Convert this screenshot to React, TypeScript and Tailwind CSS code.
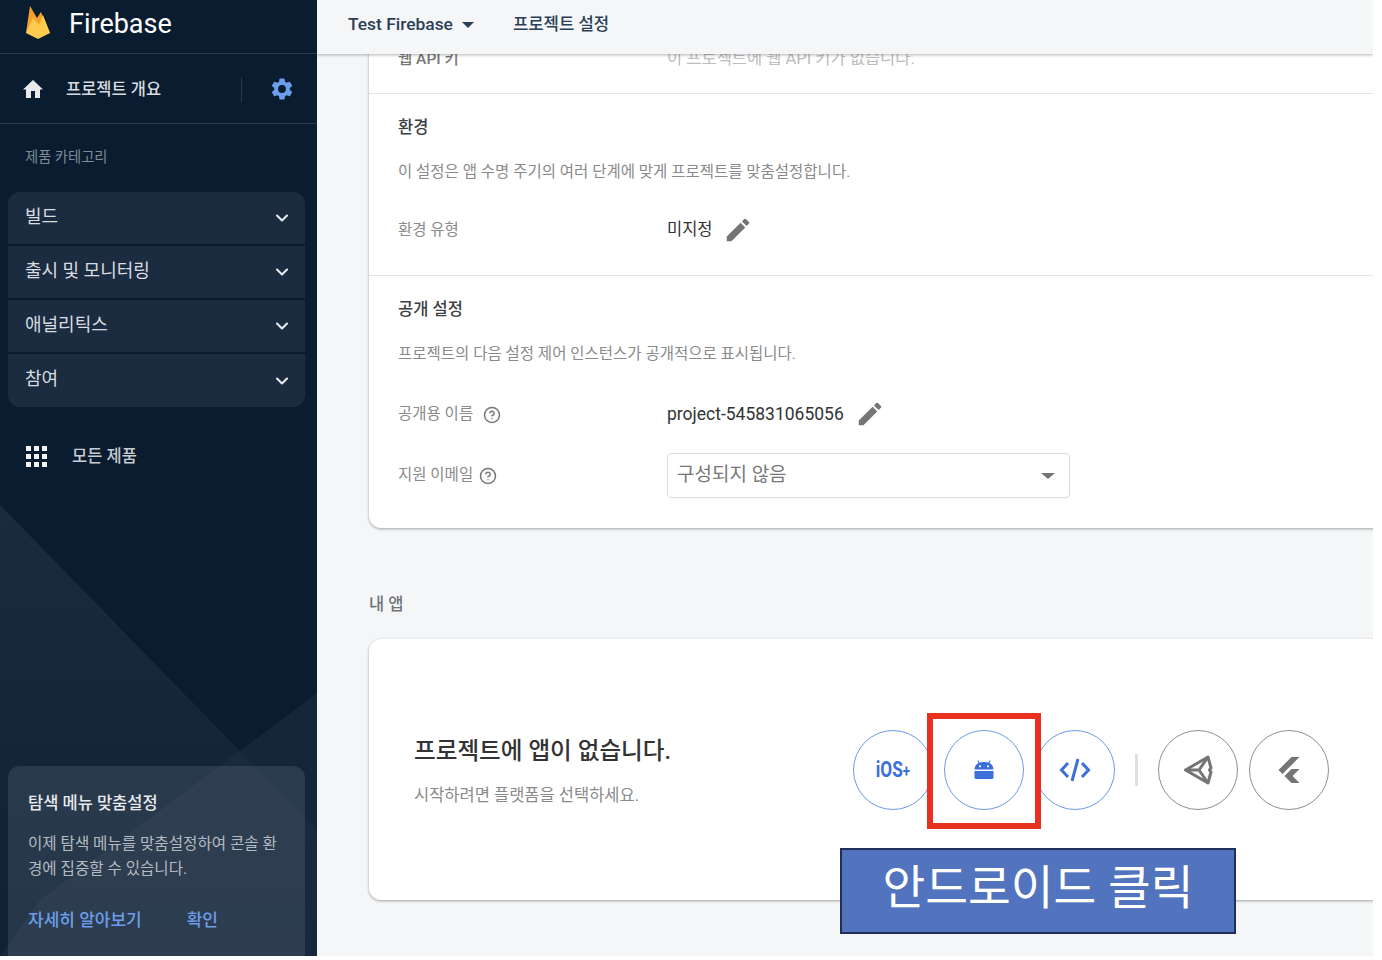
import { ChevronDown, CircleHelp } from "lucide-react";
import { SiFlutter } from "react-icons/si";

const FONT = "font-['Roboto','Noto_Sans_CJK_KR',sans-serif]";

const menuItems = ["빌드", "출시 및 모니터링", "애널리틱스", "참여"];

const FirebaseLogo = () => (
  <svg width="24" height="33" viewBox="0 0 24 33">
    <path d="M0 27 L4 0 L11 12 L15 6 L24 27 Z" fill="#f5a02c" />
    <path d="M0 27 L7 12 L13 19 L17 9 L24 27 L12 33 Z" fill="#fdcb4e" />
  </svg>
);

const HomeIcon = () => (
  <svg width="24" height="24" viewBox="0 0 24 24" fill="#e8eaed">
    <path d="M10 21v-7h4v7h5v-8.5h3L12 3 2 12.5h3V21z" />
  </svg>
);

const GearIcon = () => (
  <svg width="26" height="26" viewBox="0 0 24 24" fill="#6d9eeb">
    <path d="M19.14 12.94c.04-.3.06-.61.06-.94s-.02-.64-.07-.94l2.03-1.58a.49.49 0 0 0 .12-.61l-1.92-3.32a.49.49 0 0 0-.59-.22l-2.39.96c-.5-.38-1.03-.7-1.62-.94l-.36-2.54a.48.48 0 0 0-.48-.41h-3.84a.48.48 0 0 0-.47.41l-.36 2.54c-.59.24-1.13.57-1.62.94l-2.39-.96a.49.49 0 0 0-.59.22L2.74 8.87a.48.48 0 0 0 .12.61l2.03 1.58c-.05.3-.09.63-.09.94s.02.64.07.94l-2.03 1.58a.49.49 0 0 0-.12.61l1.92 3.32c.12.22.37.29.59.22l2.39-.96c.5.38 1.03.7 1.62.94l.36 2.54c.05.24.24.41.48.41h3.84c.24 0 .44-.17.47-.41l.36-2.54c.59-.24 1.13-.56 1.62-.94l2.39.96c.22.08.47 0 .59-.22l1.92-3.32a.48.48 0 0 0-.12-.61l-2.01-1.58zM12 15.6A3.6 3.6 0 1 1 12 8.4a3.6 3.6 0 0 1 0 7.2z" />
  </svg>
);

const GridIcon = () => (
  <div className="grid grid-cols-3 gap-[3px]">
    {Array.from({ length: 9 }).map((_, i) => (
      <div key={i} className="w-[5px] h-[5px] bg-[#f1f3f4]" />
    ))}
  </div>
);

const PencilIcon = () => (
  <svg width="30" height="30" viewBox="0 0 24 24" fill="#757575">
    <path d="M3 17.25V21h3.75L17.81 9.94l-3.75-3.75L3 17.25zM20.71 7.04a1 1 0 0 0 0-1.41l-2.34-2.34a1 1 0 0 0-1.41 0l-1.83 1.83 3.75 3.75 1.83-1.83z" />
  </svg>
);

const AndroidIcon = () => (
  <svg width="22" height="22" viewBox="0 0 22 22" fill="#3b6fd9">
    <path d="M1.5 10.5 C1.5 7.5 3.2 5.2 5.6 4 L4.4 1.8 L5.2 1.3 L6.6 3.6 C8.8 2.9 13.2 2.9 15.4 3.6 L16.8 1.3 L17.6 1.8 L16.4 4 C18.8 5.2 20.5 7.5 20.5 10.5 Z M7 6.2 a1.1 1.1 0 1 0 0 2.2 a1.1 1.1 0 1 0 0-2.2 Z M15 6.2 a1.1 1.1 0 1 0 0 2.2 a1.1 1.1 0 1 0 0-2.2 Z" fillRule="evenodd" />
    <path d="M1.5 12 H20.5 V18.5 a1.5 1.5 0 0 1-1.5 1.5 H3 a1.5 1.5 0 0 1-1.5-1.5 Z" />
  </svg>
);

const CodeIcon = () => (
  <svg width="32" height="26" viewBox="0 0 32 26" fill="none" stroke="#3b6fd9" strokeWidth="3">
    <path d="M9 6 L2.5 13 L9 20" />
    <path d="M23 6 L29.5 13 L23 20" />
    <path d="M19 2 L13 24" />
  </svg>
);

// older Unity cube mark, the package only has the newer one
const UnityIcon = () => (
  <svg width="30" height="32" viewBox="0 0 30 32" fill="none" stroke="#757575" strokeWidth="3" strokeLinejoin="round">
    <path d="M2.5 16 L25 3 L28 14 L26.5 16 L28 18 L25 29 Z" />
    <path d="M2.5 16 H16 L25 3 M16 16 L25 29" />
  </svg>
);

const SectionLabel = ({ children }: { children: React.ReactNode }) => (
  <div className="w-[269px] shrink-0 flex items-center pt-[1px] text-[15.5px] text-[#8a8a8a]">
    {children}
  </div>
);

const Circle = ({
  children,
  muted,
}: {
  children: React.ReactNode;
  muted?: boolean;
}) => (
  <div
    className={`w-[80px] h-[80px] shrink-0 rounded-full border-[1.5px] flex items-center justify-center ${
      muted ? "border-[#8f8f8f]" : "border-[#6d9bea]"
    }`}
  >
    {children}
  </div>
);

const Sidebar = () => (
  <aside className="relative w-[317px] shrink-0 h-full bg-[#0a1c30] flex flex-col overflow-hidden">
    {/* background shapes */}
    <svg className="absolute inset-0" width="317" height="956" viewBox="0 0 317 956">
      <defs>
        <linearGradient id="fadeA" x1="0" y1="0" x2="0" y2="1">
          <stop offset="0" stopColor="#1a2b3e" />
          <stop offset="1" stopColor="#0e2135" />
        </linearGradient>
      </defs>
      <path d="M0 505 L317 830 V956 H0 Z" fill="url(#fadeA)" />
      <path d="M317 693 L40 900 L0 956 H317 Z" fill="#1f3043" fillOpacity="0.55" />
    </svg>

    <div className="relative flex flex-col h-full">
      {/* Logo */}
      <div className="h-[54px] shrink-0 flex items-center border-b border-[#2a3a4c] pl-[26px] pb-[8px]">
        <FirebaseLogo />
        <span className="ml-[19px] mt-[3px] text-[27px] text-white font-['Roboto',sans-serif]">
          Firebase
        </span>
      </div>

      {/* Project overview */}
      <div className="h-[70px] shrink-0 flex items-center border-b border-[#2a3a4c] pl-[21px] pt-[1px]">
        <HomeIcon />
        <span className="ml-[21px] mt-[2px] text-[16.5px] font-medium text-[#d7dade]">
          프로젝트 개요
        </span>
        <div className="ml-[80px] w-px h-[25px] bg-[#2a3a4c]" />
        <div className="ml-[27px]">
          <GearIcon />
        </div>
      </div>

      <div className="pl-[25px] mt-[24px] text-[14.3px] leading-[18px] text-[#7f8a96]">
        제품 카테고리
      </div>

      {/* Categories */}
      <div className="mx-2 mt-[26px] rounded-xl overflow-hidden flex flex-col gap-[2px] w-[297px]">
        {menuItems.map((item) => (
          <div
            key={item}
            className="h-[52px] last:h-[53px] bg-[#1b2c41] flex items-center justify-between pl-[17px] pr-[13px]"
          >
            <span className="text-[18px] pb-[4px] text-[#d9dce0]">{item}</span>
            <ChevronDown size={20} strokeWidth={2.5} className="text-[#e8eaed]" />
          </div>
        ))}
      </div>

      <div className="flex items-center pl-[26px] mt-[36px]">
        <GridIcon />
        <span className="ml-[25px] mt-[2px] text-[16.5px] font-medium text-[#c9cdd2]">
          모든 제품
        </span>
      </div>

      {/* Customize card */}
      <div className="mt-auto mx-2 w-[297px] h-[190px] rounded-t-xl bg-[#f1f5ff]/10 pl-5 pr-5 pt-[28px]">
        <div className="text-[16.5px] leading-[20px] font-medium text-[#e8eaed]">
          탐색 메뉴 맞춤설정
        </div>
        <div className="mt-[18px] text-[15.6px] leading-[25px] text-[#b4bac2]">
          이제 탐색 메뉴를 맞춤설정하여 콘솔 환경에 집중할 수 있습니다.
        </div>
        <div className="mt-[26px] flex text-[17px] font-medium text-[#6d9eeb]">
          <span>자세히 알아보기</span>
          <span className="ml-[45px]">확인</span>
        </div>
      </div>
    </div>
  </aside>
);

const Header = () => (
  <header className="relative z-10 h-[54px] shrink-0 bg-[#f5f6f8] shadow-[0_1px_3px_rgba(0,0,0,0.3)] flex items-center pl-[31px] pb-[5px] text-[#2b4056]">
    <span className="text-[17.4px] font-medium">Test Firebase</span>
    <span className="ml-[9px] w-0 h-0 border-x-[6px] border-x-transparent border-t-[6px] border-t-[#2b4056]" />
    <span className="ml-[39px] text-[16.7px] font-medium">프로젝트 설정</span>
  </header>
);

const SettingsCard = () => (
  <section className="w-[1100px] bg-white rounded-b-xl shadow-[0_1px_3px_rgba(0,0,0,0.35)]">
    {/* API key row, mostly hidden behind the header */}
    <div className="h-[50px] pl-[29px] flex items-start pt-[3px] border-b border-[#e4e6e8]">
      <SectionLabel>
        <span className="font-medium text-[#777]">웹 API 키</span>
      </SectionLabel>
      <span className="text-[16.5px] text-[#bdbdbd]">이 프로젝트에 웹 API 키가 없습니다.</span>
    </div>

    {/* Environment */}
    <div className="h-[182px] pl-[29px] pt-[23px] border-b border-[#e4e6e8]">
      <h3 className="text-[16.5px] leading-[22px] font-medium text-[#3c4043]">환경</h3>
      <p className="mt-[22px] text-[15.5px] leading-[22px] text-[#8a8a8a]">
        이 설정은 앱 수명 주기의 여러 단계에 맞게 프로젝트를 맞춤설정합니다.
      </p>
      <div className="mt-[29px] flex items-center h-[36px]">
        <SectionLabel>환경 유형</SectionLabel>
        <span className="text-[16.5px] text-[#333]">미지정</span>
        <span className="ml-[10px] flex">
          <PencilIcon />
        </span>
      </div>
    </div>

    {/* Public settings */}
    <div className="h-[252px] pl-[29px] pt-[23px]">
      <h3 className="text-[16.5px] leading-[22px] font-medium text-[#3c4043]">공개 설정</h3>
      <p className="mt-[22px] text-[15.5px] leading-[22px] text-[#8a8a8a]">
        프로젝트의 다음 설정 제어 인스턴스가 공개적으로 표시됩니다.
      </p>
      <div className="mt-[31px] flex items-center h-[36px]">
        <SectionLabel>
          공개용 이름
          <CircleHelp size={18} className="ml-[10px] text-[#777]" />
        </SectionLabel>
        <span className="text-[17.5px] text-[#333]">project-545831065056</span>
        <span className="ml-[11px] flex">
          <PencilIcon />
        </span>
      </div>
      <div className="mt-[21px] flex items-center h-[45px]">
        <SectionLabel>
          지원 이메일
          <CircleHelp size={18} className="ml-[6px] text-[#777]" />
        </SectionLabel>
        <div className="w-[403px] h-[45px] rounded border border-[#dcdcdc] flex items-center justify-between pl-[9px] pr-[14px]">
          <span className="text-[19px] text-[#777]">구성되지 않음</span>
          <span className="w-0 h-0 border-x-[7px] border-x-transparent border-t-[6px] border-t-[#757575]" />
        </div>
      </div>
    </div>
  </section>
);

const AppsCard = () => (
  <section className="w-[1100px] h-[261px] mt-[23px] bg-white rounded-xl shadow-[0_1px_3px_rgba(0,0,0,0.35)] flex items-center pl-[45px]">
    <div className="w-[439px] shrink-0 pt-[4px]">
      <h2 className="text-[23.6px] leading-[30px] font-medium text-[#333]">
        프로젝트에 앱이 없습니다.
      </h2>
      <p className="mt-[19px] text-[16.5px] leading-[22px] text-[#8a8a8a]">
        시작하려면 플랫폼을 선택하세요.
      </p>
    </div>
    <div className="flex items-center gap-[11px]">
      <Circle>
        <span className="text-[22px] font-bold text-[#3b6fd9] scale-x-[0.78] whitespace-nowrap">
          iOS<span className="text-[17px]">+</span>
        </span>
      </Circle>
      <Circle>
        <AndroidIcon />
      </Circle>
      <Circle>
        <CodeIcon />
      </Circle>
      <div className="w-[3px] h-[32px] bg-[#e0e0e0] mx-[9px]" />
      <Circle muted>
        <UnityIcon />
      </Circle>
      <Circle muted>
        <SiFlutter size={26} className="text-[#757575]" />
      </Circle>
    </div>
  </section>
);

export default function App() {
  return (
    <div className={`relative w-[1373px] h-[956px] flex overflow-hidden ${FONT}`}>
      <Sidebar />
      <main className="flex-1 min-w-0 h-full bg-[#f5f6f8] flex flex-col overflow-hidden">
        <Header />
        <div className="-mt-[10px] pl-[52px]">
          <SettingsCard />
          <div className="mt-[66px] text-[16.5px] leading-[22px] font-medium text-[#6f7479]">
            내 앱
          </div>
          <AppsCard />
        </div>
      </main>

      {/* Tutorial annotations */}
      <div className="absolute left-[927px] top-[713px] w-[114px] h-[116px] border-[6px] border-[#e8321f]" />
      <div className="absolute left-[840px] top-[848px] w-[396px] h-[86px] bg-[#5273bd] border-2 border-[#1f2f55] flex items-center justify-center pb-[4px] text-[46.5px] text-white">
        안드로이드 클릭
      </div>
    </div>
  );
}
